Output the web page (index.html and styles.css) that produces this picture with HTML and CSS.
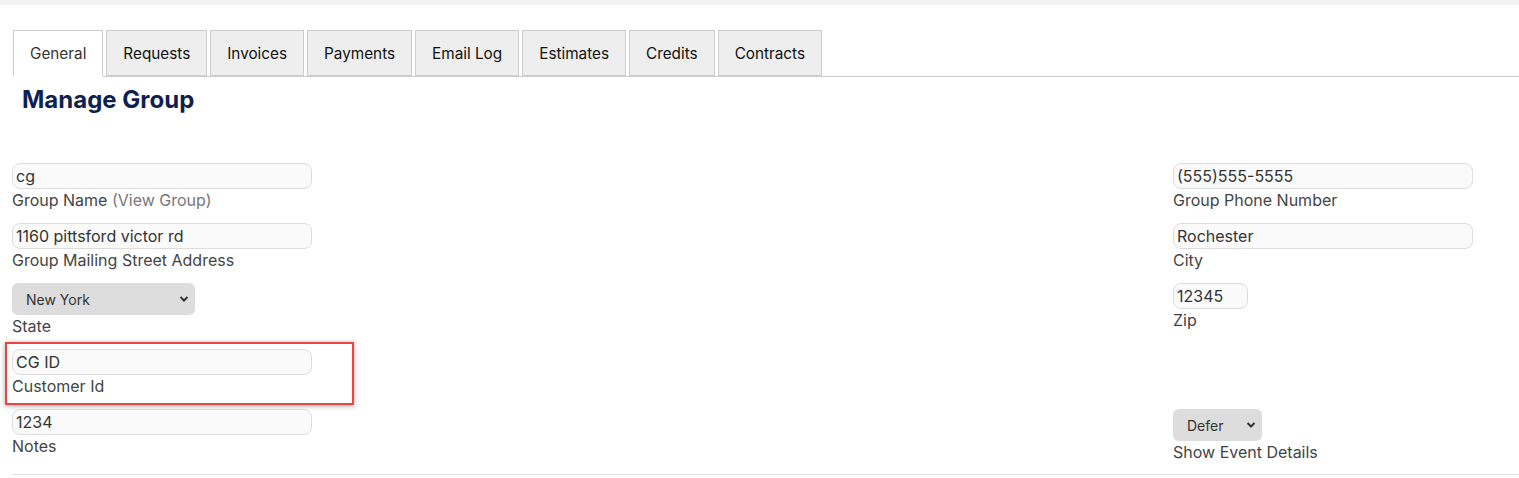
FILE: index.html
```html
<!DOCTYPE html>
<html lang="en">
<head>
<meta charset="utf-8">
<title>Manage Group</title>
<link rel="stylesheet" href="styles.css">
</head>
<body>
<div class="topbar"></div>
<div class="page">
  <nav class="tabs">
    <a class="tab active">General</a>
    <a class="tab">Requests</a>
    <a class="tab">Invoices</a>
    <a class="tab">Payments</a>
    <a class="tab">Email Log</a>
    <a class="tab">Estimates</a>
    <a class="tab">Credits</a>
    <a class="tab">Contracts</a>
  </nav>
  <h1 class="title">Manage Group</h1>
  <div class="form">
    <div class="field">
      <input class="input" type="text" value="cg">
      <div class="label">Group Name <span class="muted">(View Group)</span></div>
    </div>
    <div class="field">
      <input class="input" type="text" value="(555)555-5555">
      <div class="label">Group Phone Number</div>
    </div>
    <div class="field">
      <input class="input" type="text" value="1160 pittsford victor rd">
      <div class="label">Group Mailing Street Address</div>
    </div>
    <div class="field">
      <input class="input" type="text" value="Rochester">
      <div class="label">City</div>
    </div>
    <div class="field">
      <div class="select-wrap state">
        <select class="select"><option>New York</option></select>
        <svg class="chev" width="10" height="8" viewBox="0 0 10 8"><path d="M1.5 2 L5 5.5 L8.5 2" fill="none" stroke="#333" stroke-width="2"/></svg>
      </div>
      <div class="label">State</div>
    </div>
    <div class="field">
      <input class="input zip" type="text" value="12345">
      <div class="label">Zip</div>
    </div>
    <div class="field highlight">
      <input class="input" type="text" value="CG ID">
      <div class="label">Customer Id</div>
    </div>
    <div class="field"></div>
    <div class="field">
      <input class="input" type="text" value="1234">
      <div class="label">Notes</div>
    </div>
    <div class="field">
      <div class="select-wrap defer">
        <select class="select"><option>Defer</option></select>
        <svg class="chev" width="10" height="8" viewBox="0 0 10 8"><path d="M1.5 2 L5 5.5 L8.5 2" fill="none" stroke="#333" stroke-width="2"/></svg>
      </div>
      <div class="label">Show Event Details</div>
    </div>
  </div>
  <div class="rule"></div>
</div>
</body>
</html>
```
FILE: styles.css
```css
html, body {
  margin: 0;
  padding: 0;
  background: #fff;
  font-family: Inter, "Noto Sans", sans-serif;
  color: #333;
}
.topbar {
  height: 5px;
  background: #f3f3f3;
}
.page {
  padding: 25px 0 0 0;
}
.tabs {
  display: flex;
  gap: 3px;
  margin-left: 13px;
  border-bottom: 1px solid #cccccc;
}
.tab {
  display: block;
  box-sizing: border-box;
  height: 47px;
  line-height: 45px;
  padding: 0 16px;
  font-size: 15.3px;
  color: #111;
  background: #eeeeee;
  border: 1px solid #cccccc;
  border-bottom: 2px solid #cccccc;
  margin-bottom: -1px;
}
.tab.active {
  background: #fff;
  color: #333;
  border-bottom: 1px solid #fff;
}
.title {
  margin: 8px 0 0 22px;
  font-size: 24px;
  line-height: 29px;
  font-weight: 700;
  color: #0f1f4f;
}
.form {
  display: grid;
  grid-template-columns: 1161px 1fr;
  row-gap: 13px;
  margin-top: 49px;
  padding-left: 12px;
  align-items: start;
}
.field {
  position: relative;
}
.input {
  display: block;
  box-sizing: border-box;
  width: 300px;
  height: 26px;
  margin: 0;
  padding: 0 3px;
  border: 1px solid #dddddd;
  border-radius: 8px;
  background: #fafafa;
  font-family: inherit;
  font-size: 16px;
  color: #333;
  outline: none;
}
.input.zip {
  width: 75px;
}
.label {
  margin-top: 1px;
  font-size: 16px;
  line-height: 20px;
  color: #444;
}
.muted {
  color: #777;
}
.select-wrap {
  position: relative;
  height: 32px;
}
.select-wrap.state { width: 183px; }
.select-wrap.defer { width: 89px; }
.select {
  appearance: none;
  -webkit-appearance: none;
  display: block;
  box-sizing: border-box;
  width: 100%;
  height: 32px;
  margin: 0;
  padding: 0 0 0 14px;
  border: none;
  border-radius: 6px;
  background: #dddddd;
  font-family: inherit;
  font-size: 14px;
  color: #333;
}
.chev {
  position: absolute;
  right: 6px;
  top: 12px;
  pointer-events: none;
}
.highlight::after {
  content: "";
  position: absolute;
  left: -7px;
  top: -7px;
  width: 349px;
  height: 63px;
  box-sizing: border-box;
  border: 2px solid #ec4444;
  box-shadow: 0 1px 5px rgba(0, 0, 0, 0.35);
  pointer-events: none;
}
.rule {
  margin: 12px 0 0 13px;
  border-top: 1px solid #dddddd;
}
```
